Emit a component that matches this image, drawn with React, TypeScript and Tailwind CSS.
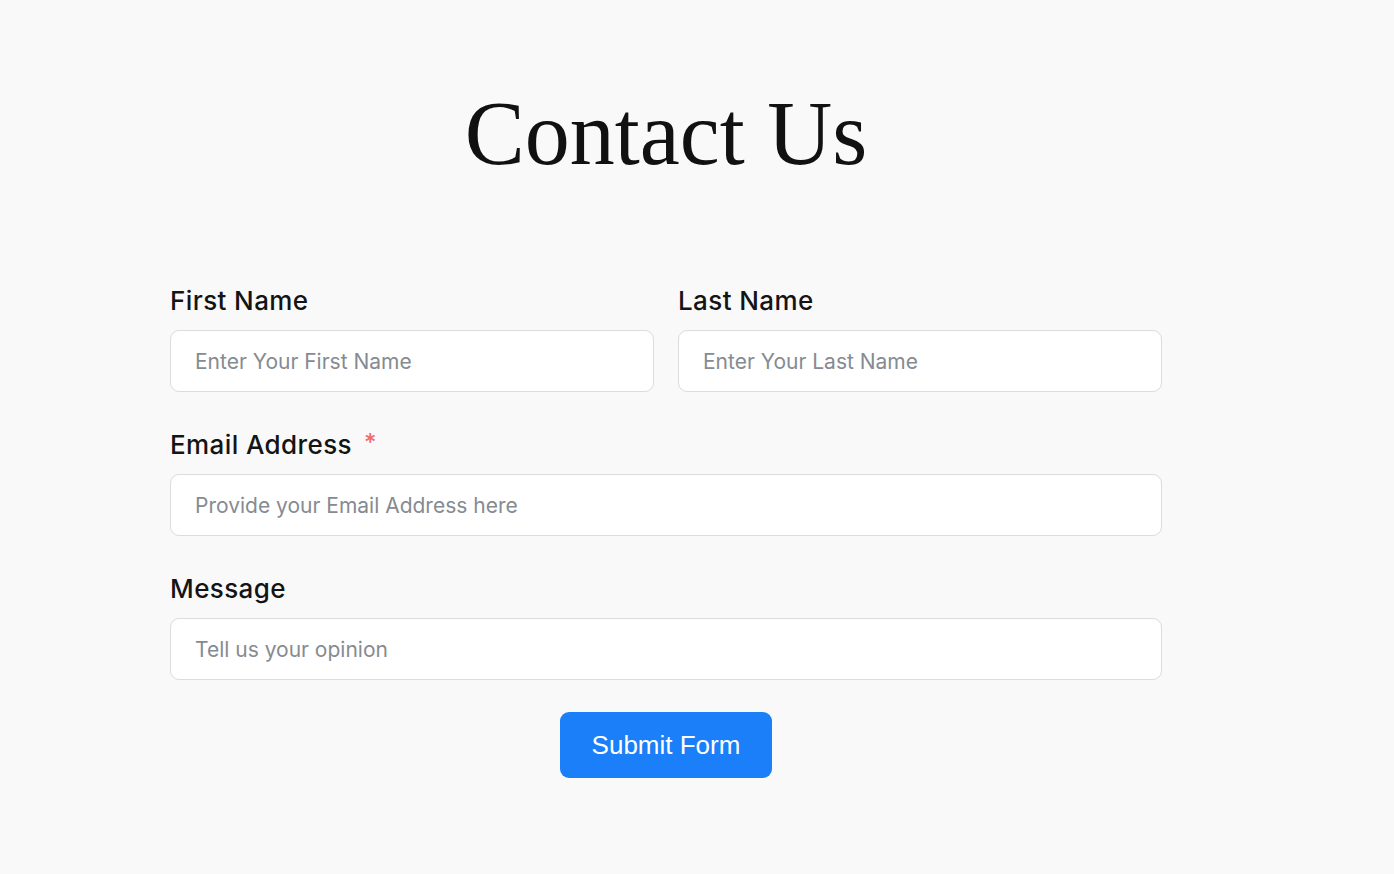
import React from "react";

const inputCls =
  "h-[62px] w-full rounded-[9px] border border-[#dcdcdc] bg-white px-[24px] text-[21px] text-[#222] placeholder:text-[#858b91] outline-none";

function Field({
  label,
  placeholder,
  required,
  type = "text",
}: {
  label: string;
  placeholder: string;
  required?: boolean;
  type?: string;
}) {
  return (
    <div className="flex flex-col">
      <label className="mb-[13px] flex h-8 items-center text-[26px] font-medium leading-8 tracking-[0.4px] text-[#141414]">
        {label}
        {required && (
          <span className="ml-[12px] -mt-[4px] text-[24px] text-[#f26b6b]">*</span>
        )}
      </label>
      <input type={type} placeholder={placeholder} className={inputCls} />
    </div>
  );
}

export default function App() {
  return (
    <div
      className="min-h-[874px] w-full bg-[#f9f9f9]"
      style={{ fontFamily: "Inter, 'Noto Sans', sans-serif" }}
    >
      <div className="w-[1332px]">
        <h1
          className="pt-[82px] text-center text-[90px] leading-[104px] text-[#111]"
          style={{ fontFamily: "'Liberation Serif', serif" }}
        >
          Contact Us
        </h1>

        <form className="mx-auto mt-[99px] flex w-[992px] flex-col gap-[37px]">
          <div className="grid grid-cols-2 gap-[24px]">
            <Field label="First Name" placeholder="Enter Your First Name" />
            <Field label="Last Name" placeholder="Enter Your Last Name" />
          </div>
          <Field label="Email Address" placeholder="Provide your Email Address here" required type="email" />
          <Field label="Message" placeholder="Tell us your opinion" />
        </form>

        <div className="mt-[32px] flex justify-center">
          <button
            type="button"
            className="h-[66px] w-[212px] rounded-[9px] bg-[#1a7ff8] text-[26px] text-white"
            style={{ fontFamily: "'Liberation Sans', Arial, sans-serif" }}
          >
            Submit Form
          </button>
        </div>
      </div>
    </div>
  );
}
